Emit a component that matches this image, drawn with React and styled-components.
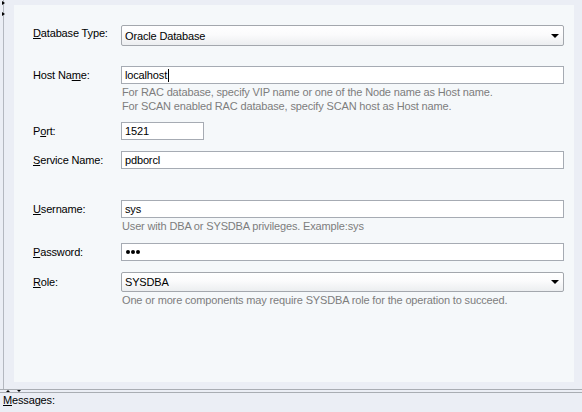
import React from "react";
import styled, { createGlobalStyle } from "styled-components";

const Global = createGlobalStyle`
  html, body { margin: 0; padding: 0; }
  body {
    width: 582px; height: 412px; overflow: hidden;
    background: #ebeef5;
    font-family: "Liberation Sans", Arial, sans-serif;
    font-size: 11px;
    letter-spacing: -0.15px;
    color: #000;
  }
`;

const Page = styled.div`
  width: 582px;
  height: 412px;
  display: flex;
  flex-direction: column;
  background: #ebeef5;
`;

const Main = styled.div`
  height: 389px;
  display: flex;
`;

const Gutter = styled.div`
  position: relative;
  width: 3px;
  border-right: 1px solid #b4b8c0;
  margin-right: 10px;
`;

const GutterArrow = styled.span`
  position: absolute;
  left: 2px;
  top: ${(p) => p.$top}px;
  width: 0;
  height: 0;
  border-top: 2px solid transparent;
  border-bottom: 2px solid transparent;
  border-left: 3px solid #000;
`;

const Panel = styled.div`
  margin-top: 5px;
  width: 560px;
  height: 377px;
  background: #f5f8fa;
  box-sizing: border-box;
  padding: 20px 10px 0 19px;
`;

const Row = styled.div`
  display: flex;
  align-items: flex-start;
  margin-top: ${(p) => p.$gap || 0}px;
`;

const Label = styled.div`
  width: 88px;
  flex: none;
  line-height: 14px;
  padding-top: ${(p) => p.$pt ?? 2}px;
`;

const U = styled.span`
  text-decoration: underline;
`;

const Field = styled.div`
  flex: 1;
  display: flex;
  flex-direction: column;
`;

const Input = styled.div`
  box-sizing: border-box;
  height: 18px;
  width: ${(p) => (p.$w ? `${p.$w}px` : "100%")};
  border: 1px solid #a6abb3;
  background: #fff;
  padding: 0 3px;
  line-height: 16px;
  display: flex;
  align-items: center;
  white-space: nowrap;
`;

const Caret = styled.span`
  display: inline-block;
  width: 1px;
  height: 13px;
  background: #000;
  margin-left: 1px;
`;

const Dots = styled.span`
  display: flex;
  gap: 1px;
  padding-left: 1px;
`;

const Dot = styled.span`
  width: 4px;
  height: 4px;
  border-radius: 50%;
  background: #000;
`;

const Select = styled.div`
  box-sizing: border-box;
  height: ${(p) => p.$h || 21}px;
  width: 100%;
  border: 1px solid #a3a7ad;
  border-radius: 2px;
  background: linear-gradient(#ffffff 0%, #fbfbfc 45%, #eceef0 100%);
  padding: 0 4px 0 3px;
  display: flex;
  align-items: center;
  justify-content: space-between;
`;

const Arrow = styled.span`
  width: 0;
  height: 0;
  border-left: 4px solid transparent;
  border-right: 4px solid transparent;
  border-top: 4px solid #000;
`;

const Help = styled.div`
  color: #7d7d7d;
  line-height: 14px;
  padding-left: 1px;
  margin-top: 1px;
  white-space: nowrap;
`;

const Splitter = styled.div`
  position: relative;
  height: 2px;
  border-top: 1px solid #a9adb3;
  border-bottom: 1px solid #a9adb3;
`;

const SplitArrow = styled.span`
  position: absolute;
  top: 0px;
  left: ${(p) => p.$left}px;
  width: 0;
  height: 0;
  border-left: 2px solid transparent;
  border-right: 2px solid transparent;
  ${(p) => (p.$up ? "border-bottom: 2px solid #000;" : "border-top: 2px solid #000;")}
`;

const Messages = styled.div`
  padding: 0 0 0 3px;
  line-height: 14px;
`;

export default function App() {
  return (
    <>
      <Global />
      <Page>
        <Main>
          <Gutter>
            <GutterArrow $top={1} />
            <GutterArrow $top={12} />
          </Gutter>
          <Panel>
            <Row>
              <Label $pt={1}>
                <U>D</U>atabase Type:
              </Label>
              <Field>
                <Select>
                  <span>Oracle Database</span>
                  <Arrow />
                </Select>
              </Field>
            </Row>
            <Row $gap={20}>
              <Label>
                Host Na<U>m</U>e:
              </Label>
              <Field>
                <Input>
                  localhost
                  <Caret />
                </Input>
                <Help>
                  For RAC database, specify VIP name or one of the Node name as Host name.
                  <br />
                  For SCAN enabled RAC database, specify SCAN host as Host name.
                </Help>
              </Field>
            </Row>
            <Row $gap={9}>
              <Label>
                P<U>o</U>rt:
              </Label>
              <Field>
                <Input $w={83}>1521</Input>
              </Field>
            </Row>
            <Row $gap={11}>
              <Label>
                <U>S</U>ervice Name:
              </Label>
              <Field>
                <Input>pdborcl</Input>
              </Field>
            </Row>
            <Row $gap={31}>
              <Label>
                <U>U</U>sername:
              </Label>
              <Field>
                <Input>sys</Input>
                <Help>User with DBA or SYSDBA privileges. Example:sys</Help>
              </Field>
            </Row>
            <Row $gap={10}>
              <Label>
                <U>P</U>assword:
              </Label>
              <Field>
                <Input>
                  <Dots aria-label="password">
                    <Dot />
                    <Dot />
                    <Dot />
                  </Dots>
                </Input>
              </Field>
            </Row>
            <Row $gap={11}>
              <Label $pt={3}>
                <U>R</U>ole:
              </Label>
              <Field>
                <Select $h={20}>
                  <span>SYSDBA</span>
                  <Arrow />
                </Select>
                <Help>One or more components may require SYSDBA role for the operation to succeed.</Help>
              </Field>
            </Row>
          </Panel>
        </Main>
        <Splitter>
          <SplitArrow $left={6} $up />
          <SplitArrow $left={17} />
        </Splitter>
        <Messages>
          <U>M</U>essages:
        </Messages>
      </Page>
    </>
  );
}
